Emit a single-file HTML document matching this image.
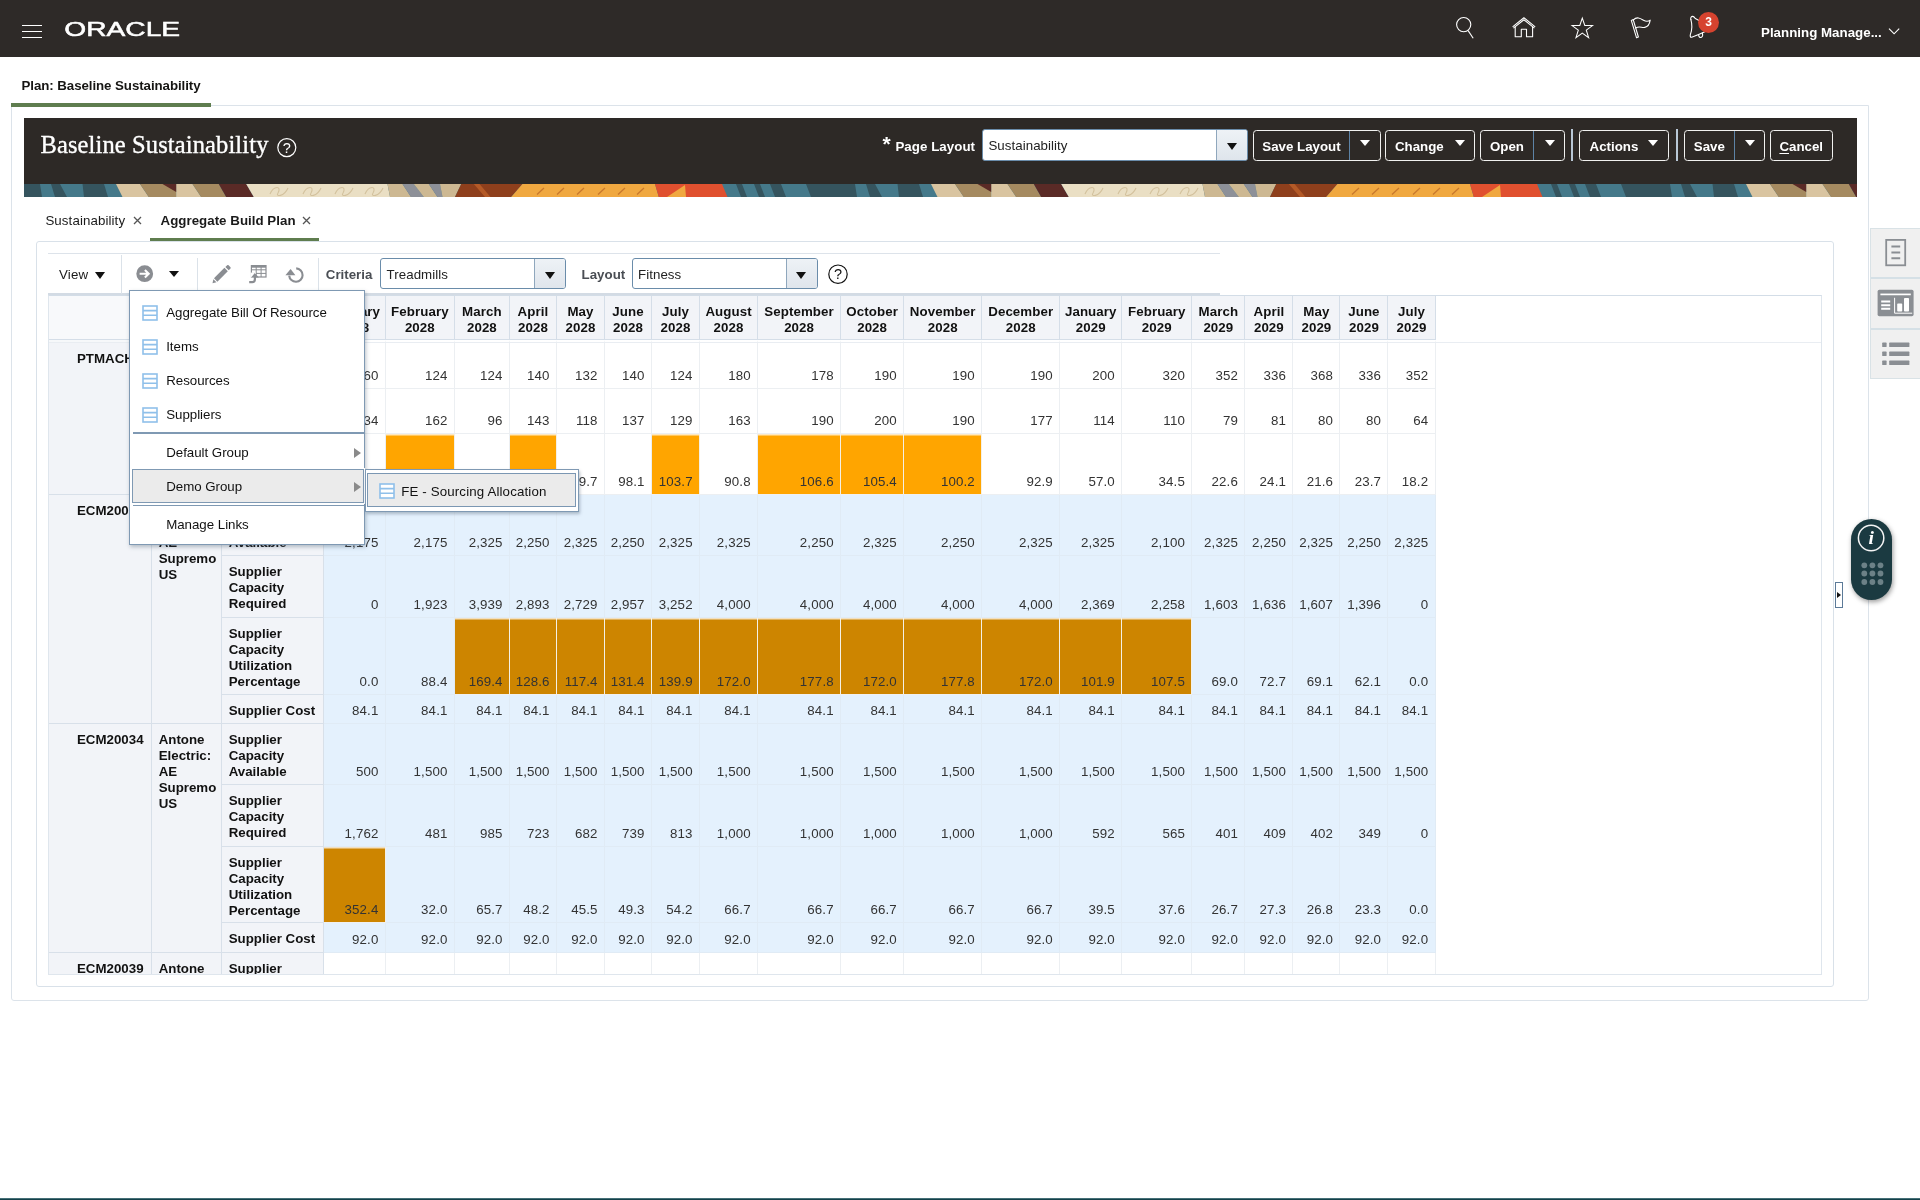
<!DOCTYPE html>
<html lang="en">
<head>
<meta charset="utf-8">
<title>Plan: Baseline Sustainability</title>
<style>
*{box-sizing:border-box;margin:0;padding:0}
html,body{width:1920px;height:1200px;overflow:hidden;background:#fff}
body{position:relative;font-family:"Liberation Sans",Arial,Helvetica,sans-serif;font-size:13.3px;color:#1a1a1a;line-height:16px}
.abs{position:absolute}
#page{position:absolute;left:0;top:0;width:1920px;height:1200px;overflow:hidden;will-change:transform}
/* ---------- global header ---------- */
#top{position:absolute;left:0;top:0;width:1920px;height:56.5px;background:#2e2a28}
#top .burger{position:absolute;left:21.5px;top:24.9px;width:20.5px;height:14px}
#top .burger i{display:block;height:1.6px;background:#fff;margin-bottom:4.4px}
#top svg{position:absolute;overflow:visible}
#top .user{position:absolute;left:1761px;top:24.5px;color:#fff;font-weight:bold;font-size:13.3px;letter-spacing:.02px;white-space:nowrap}
#top .badge{position:absolute;left:1698.1px;top:11.5px;width:21px;height:21px;border-radius:50%;background:#d6432f;color:#fff;font-weight:bold;font-size:12px;line-height:21px;text-align:center}
/* ---------- plan tab ---------- */
#plantab{position:absolute;left:21.5px;top:78px;font-weight:bold;font-size:13.3px;color:#161513;white-space:nowrap;letter-spacing:-.07px}
#planline{position:absolute;left:11px;top:103px;width:200px;height:3.6px;background:#5f7d4f}
#outer{position:absolute;left:11px;top:105px;width:1858px;height:896px;border:1.5px solid #dce3ea;border-radius:0 0 3px 3px}
/* ---------- banner ---------- */
#banner{position:absolute;left:24px;top:118px;width:1833px;height:66px;background:#2d2926}
#banner h1{position:absolute;left:16.5px;top:11.9px;font-family:"Liberation Serif","Times New Roman",serif;font-weight:normal;font-size:24.5px;line-height:30px;color:#fff;white-space:nowrap;letter-spacing:.12px;-webkit-text-stroke:.35px #fff}
#strip{position:absolute;left:24px;top:183.8px;width:1833px;height:13px;overflow:hidden}
.blabel{position:absolute;color:#fff;font-weight:bold;font-size:13.3px;white-space:nowrap}
.bbtn{position:absolute;top:11.7px;height:31px;border:1.6px solid #f1f1ef;border-radius:3.5px;color:#fff;font-weight:bold;font-size:13.3px;line-height:32px;padding-left:8.3px;white-space:nowrap}
.bbtn .tri{position:absolute;top:9.5px;width:0;height:0;border-left:5px solid transparent;border-right:5px solid transparent;border-top:6.8px solid #fff}
.bbtn .split{position:absolute;top:0;bottom:0;width:1.2px;background:#5d83a6}
.bsep{position:absolute;top:11px;width:1.6px;height:32px;background:#b9c8d6}
.combo{position:absolute;height:31.5px;border:1.2px solid #6a8caa;border-radius:3px;background:#fff;font-size:13.3px;color:#222;line-height:31.6px;padding-left:5.4px;letter-spacing:.06px;white-space:nowrap}
.combo .btn{position:absolute;right:0;top:0;bottom:0;width:31px;border-left:1.2px solid #8fa7bd;background:linear-gradient(#eef2f6,#dfe5ec);border-radius:0 2px 2px 0}
.combo .btn:after{content:"";position:absolute;left:9.5px;top:12.5px;border-left:5.3px solid transparent;border-right:5.3px solid transparent;border-top:7px solid #111}
/* ---------- sub tabs ---------- */
.subtab{position:absolute;top:212.6px;font-size:13.3px;white-space:nowrap;color:#1a1a1a;letter-spacing:.1px}
.subtab b{letter-spacing:.03px}
.subtab b{font-weight:bold}
.x{position:absolute;top:216px;width:9px;height:9px}
#subline{position:absolute;left:150px;top:238px;width:169px;height:3.2px;background:#5f7d4f}
#inner{position:absolute;left:35.6px;top:240.6px;width:1798.4px;height:746.4px;border:1.5px solid #d9e1e9;border-radius:3px}
/* ---------- toolbar ---------- */
#toolbar{position:absolute;left:48px;top:253px;width:1171.5px;height:42px;border-top:1.6px solid #dde3ea;border-bottom:2.4px solid #d3dbe4}
.tsep{position:absolute;top:256px;width:1.3px;height:37px;background:#dbe2e9}
.tlabel{position:absolute;top:266.8px;font-weight:bold;font-size:13.3px;color:#4a4e54;white-space:nowrap}
/* ---------- pivot table ---------- */
#grid{position:absolute;left:48px;top:295px;width:1773.5px;height:679.6px;overflow:hidden;border:1.2px solid #dfe6ed;border-top:1.6px solid #d3dde7;background:#fff}
#grid .hline{position:absolute;left:0;top:46.4px;width:100%;height:1px;background:#e9edf2}
table.pivot{position:absolute;left:-.4px;top:0;border-collapse:separate;border-spacing:0;table-layout:fixed;width:1387px}
table.pivot th,table.pivot td{font-size:13.3px;line-height:16px;overflow:hidden}
table.pivot thead th{height:44px;background:#f2f4f8;font-weight:bold;color:#111;text-align:center;vertical-align:top;padding:7.9px 0 0 0;border-right:1.3px solid #d5dee8;border-bottom:1.3px solid #d5dee8;white-space:nowrap;letter-spacing:.08px}
table.pivot thead th.corner{border-right:1.3px solid #d5dee8;background:#f8f9fb}
table.pivot tbody tr:first-child th,table.pivot tbody tr:first-child td{border-top:3px solid #fff}
table.pivot tbody tr:first-child th{border-top:3px solid #f6f8fa}
table.pivot th.rh{background:#f2f4f8;font-weight:bold;color:#111;text-align:left;vertical-align:top;padding:8.1px 2px 0 7px;border-right:1.3px solid #d8e0e9;border-bottom:1.3px solid #d8e0e9}
table.pivot th.rh div{overflow:hidden}
table.pivot th.item{padding-left:28.4px}
table.pivot td{text-align:right;vertical-align:bottom;padding:0 6.4px 4px 0;color:#333;border-right:1.2px solid #eceff2;border-bottom:1.2px solid #eceff2;background:#fff;white-space:nowrap;letter-spacing:.12px}
table.pivot tr.sel td{background:#e4f1fd;border-right-color:#e0ebf5;border-bottom-color:#e0ebf5}
table.pivot td.o1{background:#ffa500!important;background-clip:padding-box}
table.pivot td.o2{background:#cd8500!important}
table.pivot td.o1,table.pivot td.o2{border-right-color:#f4f0e6!important;border-bottom-color:#f0f0f0!important;box-shadow:inset 0 1.5px 0 rgba(255,255,255,.75)}
/* ---------- popup menus ---------- */
#menu{position:absolute;left:129px;top:289.5px;width:236px;height:255px;background:#fff;border:1.3px solid #7f99b3;box-shadow:1px 2px 4px rgba(60,80,100,.35)}
.mi{position:absolute;left:36.2px;font-size:13.3px;color:#111;white-space:nowrap;letter-spacing:-.02px}
.micon{position:absolute;width:16px;height:16px}
.msep{position:absolute;left:3px;right:0;height:1.5px;background:#7f99b3}
.marrow{position:absolute;left:224px;width:0;height:0;border-top:5px solid transparent;border-bottom:5px solid transparent;border-left:7.4px solid #8a8a8a}
#mhl{position:absolute;left:2px;top:178.6px;width:231.5px;height:33.5px;background:#ebebeb;border:1.4px solid #7f99b3;box-shadow:0 0 0 1px #fff}
#submenu{position:absolute;left:365px;top:469px;width:213.5px;height:43px;background:#fff;border:1.4px solid #7f99b3;box-shadow:1px 2px 3px rgba(60,80,100,.35)}
#submenu .it{position:absolute;left:1.2px;top:3.4px;width:209.3px;height:33.4px;background:#ebebeb;border:1.3px solid #7b97b3}
/* ---------- right rail ---------- */
#rail{position:absolute;left:1870.4px;top:227.5px;width:50px;height:151px;background:#f0f0f0;border:1.2px solid #d9e2e6;border-right:none}
#rail .d{position:absolute;left:0;width:100%;height:1.5px;background:#d5e0e6}
#pill{position:absolute;left:1850.6px;top:518.8px;width:41.4px;height:80.8px;border-radius:20.7px;background:#1b3a41;box-shadow:1px 2px 5px rgba(0,0,0,.4)}
#pill .c{position:absolute;left:6.8px;top:5.8px;width:27px;height:27px;border:1.5px solid #f3f3f3;border-radius:50%;color:#fff;font-family:"Liberation Serif",serif;font-style:italic;font-weight:bold;font-size:21px;line-height:23px;text-align:center;padding-left:1px}
#pill .dots{position:absolute;left:10.2px;top:43.2px;width:24px;line-height:0;font-size:0}
#pill .dots i{display:inline-block;width:5.8px;height:5.8px;border-radius:50%;background:#6b8187;margin:0 2.3px 2.6px 0}
#splitter{position:absolute;left:1835.2px;top:582px;width:7.8px;height:25.6px;border:1.2px solid #5c7a98;background:#fff}
#splitter:after{content:"";position:absolute;left:1.2px;top:8.6px;border-top:3.8px solid transparent;border-bottom:3.8px solid transparent;border-left:4.6px solid #111}
#bottomline{position:absolute;left:0;top:1197.6px;width:1920px;height:2.4px;background:linear-gradient(#7fa3aa,#17464f 45%,#123b44)}
</style>
</head>
<body>
<div id="page">

<!-- =============== GLOBAL HEADER =============== -->
<div id="top">
  <div class="burger"><i></i><i></i><i></i></div>
  <svg style="left:65px;top:17px" width="116" height="24" viewBox="0 0 116 24"><text x="-0.7" y="18.8" fill="#fff" font-family="Liberation Sans, Arial, sans-serif" font-size="20" stroke="#fff" stroke-width="0.5" textLength="115.8" lengthAdjust="spacingAndGlyphs">ORACLE</text></svg>
  <!-- search -->
  <svg style="left:1452px;top:14px" width="26" height="28" viewBox="0 0 26 28" fill="none" stroke="#fff" stroke-width="1.1"><circle cx="11.7" cy="10.6" r="7.1"/><path d="M16.1 16.6 L21.2 24.2"/></svg>
  <!-- home -->
  <svg style="left:1510px;top:14px" width="28" height="26" viewBox="0 0 28 26" fill="none" stroke="#fff" stroke-width="1.1" stroke-linejoin="round"><path d="M2.6 12.9 L13.9 3.8 L25.2 12.9"/><path d="M3.4 14.1 L13.9 5.8 L24.4 14.1"/><path d="M5.2 12.6 V22.8 H11.3 V15.2 H16.5 V22.8 H22.6 V12.6"/></svg>
  <!-- star -->
  <svg style="left:1569px;top:14px" width="28" height="27" viewBox="0 0 28 27" fill="none" stroke="#fff" stroke-width="1.05" stroke-linejoin="miter"><path d="M13.3 4.2 L15.8 11.5 L23.5 11.6 L17.3 16.2 L19.6 23.6 L13.3 19.1 L7.0 23.6 L9.3 16.2 L3.1 11.6 L10.8 11.5 Z"/></svg>
  <!-- flag -->
  <svg style="left:1627px;top:14px" width="28" height="27" viewBox="0 0 28 27" fill="none" stroke="#fff" stroke-width="1.1" stroke-linejoin="round" stroke-linecap="round"><path d="M4.3 6.4 L6.2 5.6 L11.4 23 L9.5 23.7 Z"/><path d="M6.4 5.9 C10 2.2 13.5 4.5 16.5 6.2 C19 7.6 21.5 7.3 23.2 6.2 C22.6 10 20.5 12.9 17.8 13.4 C14.5 14 12.6 11.6 8.7 14"/></svg>
  <!-- bell -->
  <svg style="left:1686px;top:13px" width="28" height="28" viewBox="0 0 28 28" fill="none" stroke="#fff" stroke-width="1.1" stroke-linejoin="round" stroke-linecap="round"><path d="M4.9 6.6 C4.2 4.6 5.4 3.3 6.7 3.4 C8 3.5 8.6 4.6 9.3 5.6 L13 7.4"/><path d="M4.9 6.6 C6.3 11.5 6.2 16.5 4.4 21.4 C4 22.8 4.2 24.6 5.7 24.2 L12.6 21.6 L21.6 17.5"/><path d="M12.7 21.6 C12.4 23.7 14 25 15.4 24.3 C16.6 23.7 16.9 22 16.4 20.1"/></svg>
  <div class="badge">3</div>
  <div class="user">Planning Manage...</div>
  <svg style="left:1888px;top:26.7px" width="13" height="9" viewBox="0 0 13 9" fill="none" stroke="#fff" stroke-width="1.15"><path d="M1 1.7 L6.1 6.8 L11.2 1.7"/></svg>
</div>

<!-- =============== PLAN TAB =============== -->
<div id="outer"></div>
<div id="plantab">Plan: Baseline Sustainability</div>
<div id="planline"></div>

<!-- =============== BANNER =============== -->
<div id="banner">
  <h1>Baseline Sustainability</h1>
  <svg class="abs" style="left:251.5px;top:18.5px" width="22" height="22" viewBox="0 0 22 22"><circle cx="10.8" cy="10.6" r="9" fill="none" stroke="#fff" stroke-width="1.2"/><text x="10.9" y="15.8" text-anchor="middle" fill="#fff" font-family="Liberation Sans, Arial, sans-serif" font-size="14.5">?</text></svg>
  <div class="blabel" style="left:858.6px;top:15.2px;font-size:21px;line-height:21px">*</div>
  <div class="blabel" style="left:871.4px;top:20.8px;letter-spacing:.06px">Page Layout</div>
  <div class="combo" style="left:958px;top:11.3px;width:266px">Sustainability<span class="btn"></span></div>

  <div class="bbtn" style="left:1229px;width:127.6px">Save Layout<span class="split" style="left:94.5px"></span><span class="tri" style="left:106px"></span></div>
  <div class="bbtn" style="left:1361px;width:90px;padding-left:9px">Change<span class="tri" style="left:68.5px"></span></div>
  <div class="bbtn" style="left:1456px;width:85px;padding-left:9px">Open<span class="split" style="left:52px"></span><span class="tri" style="left:63.5px"></span></div>
  <div class="bsep" style="left:1547.3px"></div>
  <div class="bbtn" style="left:1555.2px;width:89.5px;padding-left:9.4px">Actions<span class="tri" style="left:68px"></span></div>
  <div class="bsep" style="left:1652px"></div>
  <div class="bbtn" style="left:1660.2px;width:81px;padding-left:8.6px">Save<span class="split" style="left:48.5px"></span><span class="tri" style="left:60px"></span></div>
  <div class="bbtn" style="left:1746px;width:63px;padding-left:8.4px"><span style="text-decoration:underline;text-underline-offset:2px">C</span>ancel</div>
</div>
<div id="strip"><svg width="1833" height="13" viewBox="24 0 1833 13" preserveAspectRatio="none"><rect x="24" y="0" width="1833" height="13" fill="#45798a"/><polygon fill="#45798a" points="-93.0,0 116.0,0 122.5,13 -87.5,13"/><polygon fill="#35545e" points="-79.0,0 -73.0,0 -68.0,13 -74.0,13"/><polygon fill="#35545e" points="-61.0,0 -55.0,0 -50.0,13 -56.0,13"/><polygon fill="#35545e" points="-45.0,0 -34.0,0 -29.0,13 -40.0,13"/><polygon fill="#35545e" points="-9.0,0 40.0,0 42.0,13 -4.0,13"/><polygon fill="#35545e" points="51.0,0 60.0,0 67.0,13 55.0,13"/><polygon fill="#35545e" points="82.5,0 104.0,0 108.0,13 84.0,13"/><polygon fill="#d9c4a0" points="116.0,0 140.0,0 148.8,13 122.5,13"/><polygon fill="#a58a60" points="140.0,0 176.2,0 176.2,13 148.8,13"/><polygon fill="#d9c4a0" points="176.2,0 192.5,0 201.2,13 176.2,13"/><polygon fill="#a58a60" points="192.5,0 218.8,0 226.2,13 201.2,13"/><polygon fill="#5a2a26" points="218.8,0 246.2,0 253.8,13 226.2,13"/><polygon fill="#eadfc4" points="246.2,0 387.5,0 390.0,13 253.8,13"/><polygon fill="#cdb892" points="387.5,0 402.5,0 411.0,13 390.0,13"/><polygon fill="#8d9098" points="402.5,0 413.8,0 423.8,13 411.0,13"/><polygon fill="#cdb892" points="413.8,0 428.8,0 437.5,13 423.8,13"/><polygon fill="#8d9098" points="428.8,0 440.0,0 442.5,13 437.5,13"/><polygon fill="#cdb892" points="440.0,0 461.2,0 455.0,13 442.5,13"/><polygon fill="#8e3f1c" points="461.2,0 522.5,0 511.2,13 455.0,13"/><polygon fill="#b45a27" points="473.8,0 479.5,0 490.5,13 485.0,13"/><polygon fill="#f0a840" points="522.5,0 655.0,0 658.8,13 511.2,13"/><polygon fill="#e0502f" points="655.0,0 723.0,0 728.5,13 658.8,13"/><polygon fill="#5a2a26" points="162.5,0 176.2,0 176.2,8"/><polygon fill="#f0a840" points="667.0,13 686.0,13 685.0,1"/><path d="M537.0 10.5 l7 -6.5 M557.0 10.5 l7 -6.5 M577.0 10.5 l7 -6.5 M598.0 10.5 l7 -6.5 M618.0 10.5 l7 -6.5 M637.0 10.5 l7 -6.5" stroke="#c9782c" stroke-width="1.3" fill="none"/><path d="M270.0 10 c4 -9 12 -8 8 -1 c-3 4 6 4 10 -5 M303.0 10 c4 -9 12 -8 8 -1 c-3 4 6 4 10 -5 M335.0 10 c4 -9 12 -8 8 -1 c-3 4 6 4 10 -5 M365.0 10 c4 -9 12 -8 8 -1 c-3 4 6 4 10 -5" stroke="#d3c19d" stroke-width="1.1" fill="none"/><polygon fill="#45798a" points="722.0,0 931.0,0 937.5,13 727.5,13"/><polygon fill="#35545e" points="736.0,0 742.0,0 747.0,13 741.0,13"/><polygon fill="#35545e" points="754.0,0 760.0,0 765.0,13 759.0,13"/><polygon fill="#35545e" points="770.0,0 781.0,0 786.0,13 775.0,13"/><polygon fill="#35545e" points="806.0,0 855.0,0 857.0,13 811.0,13"/><polygon fill="#35545e" points="866.0,0 875.0,0 882.0,13 870.0,13"/><polygon fill="#35545e" points="897.5,0 919.0,0 923.0,13 899.0,13"/><polygon fill="#d9c4a0" points="931.0,0 955.0,0 963.8,13 937.5,13"/><polygon fill="#a58a60" points="955.0,0 991.2,0 991.2,13 963.8,13"/><polygon fill="#d9c4a0" points="991.2,0 1007.5,0 1016.2,13 991.2,13"/><polygon fill="#a58a60" points="1007.5,0 1033.8,0 1041.2,13 1016.2,13"/><polygon fill="#5a2a26" points="1033.8,0 1061.2,0 1068.8,13 1041.2,13"/><polygon fill="#eadfc4" points="1061.2,0 1202.5,0 1205.0,13 1068.8,13"/><polygon fill="#cdb892" points="1202.5,0 1217.5,0 1226.0,13 1205.0,13"/><polygon fill="#8d9098" points="1217.5,0 1228.8,0 1238.8,13 1226.0,13"/><polygon fill="#cdb892" points="1228.8,0 1243.8,0 1252.5,13 1238.8,13"/><polygon fill="#8d9098" points="1243.8,0 1255.0,0 1257.5,13 1252.5,13"/><polygon fill="#cdb892" points="1255.0,0 1276.2,0 1270.0,13 1257.5,13"/><polygon fill="#8e3f1c" points="1276.2,0 1337.5,0 1326.2,13 1270.0,13"/><polygon fill="#b45a27" points="1288.8,0 1294.5,0 1305.5,13 1300.0,13"/><polygon fill="#f0a840" points="1337.5,0 1470.0,0 1473.8,13 1326.2,13"/><polygon fill="#e0502f" points="1470.0,0 1538.0,0 1543.5,13 1473.8,13"/><polygon fill="#5a2a26" points="977.5,0 991.2,0 991.2,8"/><polygon fill="#f0a840" points="1482.0,13 1501.0,13 1500.0,1"/><path d="M1352.0 10.5 l7 -6.5 M1372.0 10.5 l7 -6.5 M1392.0 10.5 l7 -6.5 M1413.0 10.5 l7 -6.5 M1433.0 10.5 l7 -6.5 M1452.0 10.5 l7 -6.5" stroke="#c9782c" stroke-width="1.3" fill="none"/><path d="M1085.0 10 c4 -9 12 -8 8 -1 c-3 4 6 4 10 -5 M1118.0 10 c4 -9 12 -8 8 -1 c-3 4 6 4 10 -5 M1150.0 10 c4 -9 12 -8 8 -1 c-3 4 6 4 10 -5 M1180.0 10 c4 -9 12 -8 8 -1 c-3 4 6 4 10 -5" stroke="#d3c19d" stroke-width="1.1" fill="none"/><polygon fill="#45798a" points="1537.0,0 1746.0,0 1752.5,13 1542.5,13"/><polygon fill="#35545e" points="1551.0,0 1557.0,0 1562.0,13 1556.0,13"/><polygon fill="#35545e" points="1569.0,0 1575.0,0 1580.0,13 1574.0,13"/><polygon fill="#35545e" points="1585.0,0 1596.0,0 1601.0,13 1590.0,13"/><polygon fill="#35545e" points="1621.0,0 1670.0,0 1672.0,13 1626.0,13"/><polygon fill="#35545e" points="1681.0,0 1690.0,0 1697.0,13 1685.0,13"/><polygon fill="#35545e" points="1712.5,0 1734.0,0 1738.0,13 1714.0,13"/><polygon fill="#d9c4a0" points="1746.0,0 1770.0,0 1778.8,13 1752.5,13"/><polygon fill="#a58a60" points="1770.0,0 1806.2,0 1806.2,13 1778.8,13"/><polygon fill="#d9c4a0" points="1806.2,0 1822.5,0 1831.2,13 1806.2,13"/><polygon fill="#a58a60" points="1822.5,0 1848.8,0 1856.2,13 1831.2,13"/><polygon fill="#5a2a26" points="1848.8,0 1876.2,0 1883.8,13 1856.2,13"/><polygon fill="#eadfc4" points="1876.2,0 2017.5,0 2020.0,13 1883.8,13"/><polygon fill="#cdb892" points="2017.5,0 2032.5,0 2041.0,13 2020.0,13"/><polygon fill="#8d9098" points="2032.5,0 2043.8,0 2053.8,13 2041.0,13"/><polygon fill="#cdb892" points="2043.8,0 2058.8,0 2067.5,13 2053.8,13"/><polygon fill="#8d9098" points="2058.8,0 2070.0,0 2072.5,13 2067.5,13"/><polygon fill="#cdb892" points="2070.0,0 2091.2,0 2085.0,13 2072.5,13"/><polygon fill="#8e3f1c" points="2091.2,0 2152.5,0 2141.2,13 2085.0,13"/><polygon fill="#b45a27" points="2103.8,0 2109.5,0 2120.5,13 2115.0,13"/><polygon fill="#f0a840" points="2152.5,0 2285.0,0 2288.8,13 2141.2,13"/><polygon fill="#e0502f" points="2285.0,0 2353.0,0 2358.5,13 2288.8,13"/><polygon fill="#5a2a26" points="1792.5,0 1806.2,0 1806.2,8"/><polygon fill="#f0a840" points="2297.0,13 2316.0,13 2315.0,1"/><path d="M2167.0 10.5 l7 -6.5 M2187.0 10.5 l7 -6.5 M2207.0 10.5 l7 -6.5 M2228.0 10.5 l7 -6.5 M2248.0 10.5 l7 -6.5 M2267.0 10.5 l7 -6.5" stroke="#c9782c" stroke-width="1.3" fill="none"/><path d="M1900.0 10 c4 -9 12 -8 8 -1 c-3 4 6 4 10 -5 M1933.0 10 c4 -9 12 -8 8 -1 c-3 4 6 4 10 -5 M1965.0 10 c4 -9 12 -8 8 -1 c-3 4 6 4 10 -5 M1995.0 10 c4 -9 12 -8 8 -1 c-3 4 6 4 10 -5" stroke="#d3c19d" stroke-width="1.1" fill="none"/></svg></div>

<!-- =============== SUB TABS =============== -->
<div class="subtab" style="left:45.4px">Sustainability</div>
<svg class="x" style="left:132.5px" viewBox="0 0 9 9" stroke="#555" stroke-width="1.3" fill="none"><path d="M1 1 L8 8 M8 1 L1 8"/></svg>
<div class="subtab" style="left:160.5px"><b>Aggregate Build Plan</b></div>
<svg class="x" style="left:301.8px" viewBox="0 0 9 9" stroke="#555" stroke-width="1.3" fill="none"><path d="M1 1 L8 8 M8 1 L1 8"/></svg>
<div id="inner"></div>
<div id="subline"></div>

<!-- =============== TOOLBAR =============== -->
<div id="toolbar"></div>
<div class="abs" style="left:59px;top:266.6px;font-size:13.3px;white-space:nowrap;letter-spacing:.15px">View</div>
<div class="abs" style="left:94.5px;top:271.5px;border-left:5.3px solid transparent;border-right:5.3px solid transparent;border-top:7px solid #111"></div>
<div class="tsep" style="left:120.8px;top:254.5px;height:39px"></div>
<!-- go-to icon -->
<svg class="abs" style="left:135px;top:264px" width="20" height="20" viewBox="0 0 20 20"><circle cx="9.7" cy="9.7" r="8.4" fill="#8a8d92"/><path d="M4.6 9.7 H13.2 M9.9 5.9 L13.7 9.7 L9.9 13.5" fill="none" stroke="#fff" stroke-width="2.1"/></svg>
<div class="abs" style="left:168.6px;top:271.2px;border-left:5px solid transparent;border-right:5px solid transparent;border-top:6.6px solid #111"></div>
<div class="tsep" style="left:197px;top:257.5px;height:33px"></div>
<!-- pencil -->
<svg class="abs" style="left:211px;top:264px" width="21.2" height="20.2" viewBox="0 0 23 22" fill="#8a8d92"><path d="M15.6 3.2 L17.6 1.4 C18.1 1 18.7 1 19.1 1.4 L21.2 3.6 C21.6 4 21.6 4.6 21.2 5 L19.3 6.9 Z"/><path d="M14.6 4.2 L18.3 7.9 L6.9 19.3 L3.2 15.6 Z"/><path d="M2.5 16.6 L5.9 20 L1.6 20.9 Z"/></svg>
<!-- table export -->
<svg class="abs" style="left:248px;top:263px" width="20" height="22" viewBox="0 0 20 22" fill="none" stroke="#8a8d92"><rect x="3.4" y="2.6" width="14.6" height="11.4" stroke-width="1.2"/><path d="M3.4 3.6 H18" stroke-width="2.2"/><path d="M3.4 6.8 H18 M3.4 10.4 H18 M8.2 2.6 V14 M13.1 2.6 V14" stroke-width="1"/><rect x="2.4" y="9.6" width="5.6" height="5" fill="#fff" stroke="none"/><path d="M1.2 19.2 H4.2 C6.2 19.2 6.9 18.2 6.9 16.2 V13" stroke-width="2.2"/><path d="M3 14.4 L6.9 10 L10.8 14.4 Z" fill="#8a8d92" stroke="none"/></svg>
<!-- refresh -->
<svg class="abs" style="left:284px;top:263.5px" width="22" height="22" viewBox="0 0 22 22" fill="none" stroke="#8a8d92"><path d="M12.2 4.4 A6.7 6.7 0 1 1 5.2 11.6" stroke-width="2.1"/><path d="M1.4 11.2 L6.6 5 L11.4 11.2 Z" fill="#8a8d92" stroke="none"/></svg>
<div class="tsep" style="left:317.5px;top:257.5px;height:33px"></div>
<div class="tlabel" style="left:325.8px">Criteria</div>
<div class="combo" style="left:380.2px;top:258.2px;width:186px;height:31.2px">Treadmills<span class="btn"></span></div>
<div class="tlabel" style="left:581.6px">Layout</div>
<div class="combo" style="left:631.6px;top:258.2px;width:186px;height:31.2px">Fitness<span class="btn"></span></div>
<svg class="abs" style="left:827px;top:263px" width="22" height="22" viewBox="0 0 22 22"><circle cx="11" cy="11.2" r="9.2" fill="none" stroke="#111" stroke-width="1.2"/><text x="11.1" y="16.4" text-anchor="middle" fill="#111" font-family="Liberation Sans, Arial, sans-serif" font-size="14.5">?</text></svg>

<!-- =============== PIVOT TABLE =============== -->
<div id="grid">
<table class="pivot"><colgroup><col style="width:103px"><col style="width:70px"><col style="width:102px"><col style="width:62px"><col style="width:69px"><col style="width:55px"><col style="width:47px"><col style="width:48px"><col style="width:47px"><col style="width:48px"><col style="width:58px"><col style="width:83px"><col style="width:63px"><col style="width:78px"><col style="width:78px"><col style="width:62px"><col style="width:70px"><col style="width:53px"><col style="width:48px"><col style="width:47px"><col style="width:48px"><col style="width:47px"></colgroup>
<thead><tr><th class="corner" colspan="3"></th><th>January<br>2028</th><th>February<br>2028</th><th>March<br>2028</th><th>April<br>2028</th><th>May<br>2028</th><th>June<br>2028</th><th>July<br>2028</th><th>August<br>2028</th><th>September<br>2028</th><th>October<br>2028</th><th>November<br>2028</th><th>December<br>2028</th><th>January<br>2029</th><th>February<br>2029</th><th>March<br>2029</th><th>April<br>2029</th><th>May<br>2029</th><th>June<br>2029</th><th>July<br>2029</th></tr></thead>
<tbody>
<tr style="height:49.0px" class=""><th class="rh item" rowspan="3"><div>PTMACH</div></th><th class="rh" rowspan="3"><div>Machining<br>Center</div></th><th class="rh meas"><div>Resource<br>Availability</div></th><td>160</td><td>124</td><td>124</td><td>140</td><td>132</td><td>140</td><td>124</td><td>180</td><td>178</td><td>190</td><td>190</td><td>190</td><td>200</td><td>320</td><td>352</td><td>336</td><td>368</td><td>336</td><td>352</td></tr>
<tr style="height:44.5px" class=""><th class="rh meas"><div>Resource<br>Requirements</div></th><td>134</td><td>162</td><td>96</td><td>143</td><td>118</td><td>137</td><td>129</td><td>163</td><td>190</td><td>200</td><td>190</td><td>177</td><td>114</td><td>110</td><td>79</td><td>81</td><td>80</td><td>80</td><td>64</td></tr>
<tr style="height:61.6px" class=""><th class="rh meas"><div>Resource<br>Utilization<br>Percentage</div></th><td>83.8</td><td class="o1">130.6</td><td>77.4</td><td class="o1">102.1</td><td>89.7</td><td>98.1</td><td class="o1">103.7</td><td>90.8</td><td class="o1">106.6</td><td class="o1">105.4</td><td class="o1">100.2</td><td>92.9</td><td>57.0</td><td>34.5</td><td>22.6</td><td>24.1</td><td>21.6</td><td>23.7</td><td>18.2</td></tr>
<tr style="height:61.0px" class="sel"><th class="rh item" rowspan="4"><div>ECM20033</div></th><th class="rh" rowspan="4"><div>Antone<br>Electric:<br>AE<br>Supremo<br>US</div></th><th class="rh meas"><div>Supplier<br>Capacity<br>Available</div></th><td>2,175</td><td>2,175</td><td>2,325</td><td>2,250</td><td>2,325</td><td>2,250</td><td>2,325</td><td>2,325</td><td>2,250</td><td>2,325</td><td>2,250</td><td>2,325</td><td>2,325</td><td>2,100</td><td>2,325</td><td>2,250</td><td>2,325</td><td>2,250</td><td>2,325</td></tr>
<tr style="height:61.5px" class="sel"><th class="rh meas"><div>Supplier<br>Capacity<br>Required</div></th><td>0</td><td>1,923</td><td>3,939</td><td>2,893</td><td>2,729</td><td>2,957</td><td>3,252</td><td>4,000</td><td>4,000</td><td>4,000</td><td>4,000</td><td>4,000</td><td>2,369</td><td>2,258</td><td>1,603</td><td>1,636</td><td>1,607</td><td>1,396</td><td>0</td></tr>
<tr style="height:77.2px" class="sel"><th class="rh meas"><div>Supplier<br>Capacity<br>Utilization<br>Percentage</div></th><td>0.0</td><td>88.4</td><td class="o2">169.4</td><td class="o2">128.6</td><td class="o2">117.4</td><td class="o2">131.4</td><td class="o2">139.9</td><td class="o2">172.0</td><td class="o2">177.8</td><td class="o2">172.0</td><td class="o2">177.8</td><td class="o2">172.0</td><td class="o2">101.9</td><td class="o2">107.5</td><td>69.0</td><td>72.7</td><td>69.1</td><td>62.1</td><td>0.0</td></tr>
<tr style="height:29.2px" class="sel"><th class="rh meas"><div>Supplier Cost</div></th><td>84.1</td><td>84.1</td><td>84.1</td><td>84.1</td><td>84.1</td><td>84.1</td><td>84.1</td><td>84.1</td><td>84.1</td><td>84.1</td><td>84.1</td><td>84.1</td><td>84.1</td><td>84.1</td><td>84.1</td><td>84.1</td><td>84.1</td><td>84.1</td><td>84.1</td></tr>
<tr style="height:61.4px" class="sel"><th class="rh item" rowspan="4"><div>ECM20034</div></th><th class="rh" rowspan="4"><div>Antone<br>Electric:<br>AE<br>Supremo<br>US</div></th><th class="rh meas"><div>Supplier<br>Capacity<br>Available</div></th><td>500</td><td>1,500</td><td>1,500</td><td>1,500</td><td>1,500</td><td>1,500</td><td>1,500</td><td>1,500</td><td>1,500</td><td>1,500</td><td>1,500</td><td>1,500</td><td>1,500</td><td>1,500</td><td>1,500</td><td>1,500</td><td>1,500</td><td>1,500</td><td>1,500</td></tr>
<tr style="height:61.2px" class="sel"><th class="rh meas"><div>Supplier<br>Capacity<br>Required</div></th><td>1,762</td><td>481</td><td>985</td><td>723</td><td>682</td><td>739</td><td>813</td><td>1,000</td><td>1,000</td><td>1,000</td><td>1,000</td><td>1,000</td><td>592</td><td>565</td><td>401</td><td>409</td><td>402</td><td>349</td><td>0</td></tr>
<tr style="height:76.6px" class="sel"><th class="rh meas"><div>Supplier<br>Capacity<br>Utilization<br>Percentage</div></th><td class="o2">352.4</td><td>32.0</td><td>65.7</td><td>48.2</td><td>45.5</td><td>49.3</td><td>54.2</td><td>66.7</td><td>66.7</td><td>66.7</td><td>66.7</td><td>66.7</td><td>39.5</td><td>37.6</td><td>26.7</td><td>27.3</td><td>26.8</td><td>23.3</td><td>0.0</td></tr>
<tr style="height:29.4px" class="sel"><th class="rh meas"><div>Supplier Cost</div></th><td>92.0</td><td>92.0</td><td>92.0</td><td>92.0</td><td>92.0</td><td>92.0</td><td>92.0</td><td>92.0</td><td>92.0</td><td>92.0</td><td>92.0</td><td>92.0</td><td>92.0</td><td>92.0</td><td>92.0</td><td>92.0</td><td>92.0</td><td>92.0</td><td>92.0</td></tr>
<tr style="height:61.4px" class=""><th class="rh item" rowspan="1"><div>ECM20039</div></th><th class="rh" rowspan="1"><div>Antone<br>Electric:<br>AE<br>Supremo<br>US</div></th><th class="rh meas"><div>Supplier<br>Capacity<br>Available</div></th><td></td><td></td><td></td><td></td><td></td><td></td><td></td><td></td><td></td><td></td><td></td><td></td><td></td><td></td><td></td><td></td><td></td><td></td><td></td></tr>
</tbody></table>
<div class="hline"></div>
</div>

<!-- =============== POPUP MENU =============== -->
<div id="menu">
  <div id="mhl"></div>
  <svg class="micon" style="left:11.6px;top:14.2px" viewBox="0 0 16 16"><rect x="1" y="1" width="14" height="14" fill="#fff" stroke="#8fc0ea" stroke-width="1.6"/><path d="M1 5.6 H15 M1 10.2 H15" stroke="#8fc0ea" stroke-width="1.6"/></svg>
  <div class="mi" style="top:14.5px">Aggregate Bill Of Resource</div>
  <svg class="micon" style="left:11.6px;top:48.2px" viewBox="0 0 16 16"><rect x="1" y="1" width="14" height="14" fill="#fff" stroke="#8fc0ea" stroke-width="1.6"/><path d="M1 5.6 H15 M1 10.2 H15" stroke="#8fc0ea" stroke-width="1.6"/></svg>
  <div class="mi" style="top:48.5px">Items</div>
  <svg class="micon" style="left:11.6px;top:82.2px" viewBox="0 0 16 16"><rect x="1" y="1" width="14" height="14" fill="#fff" stroke="#8fc0ea" stroke-width="1.6"/><path d="M1 5.6 H15 M1 10.2 H15" stroke="#8fc0ea" stroke-width="1.6"/></svg>
  <div class="mi" style="top:82.5px">Resources</div>
  <svg class="micon" style="left:11.6px;top:116.2px" viewBox="0 0 16 16"><rect x="1" y="1" width="14" height="14" fill="#fff" stroke="#8fc0ea" stroke-width="1.6"/><path d="M1 5.6 H15 M1 10.2 H15" stroke="#8fc0ea" stroke-width="1.6"/></svg>
  <div class="mi" style="top:116.5px">Suppliers</div>
  <div class="msep" style="top:141.8px"></div>
  <div class="mi" style="top:154.5px">Default Group</div>
  <div class="marrow" style="top:157.3px"></div>
  <div class="mi" style="top:188.7px">Demo Group</div>
  <div class="marrow" style="top:191.5px"></div>
  <div class="msep" style="top:214.2px"></div>
  <div class="mi" style="top:226px">Manage Links</div>
</div>
<div id="submenu">
  <div class="it">
    <svg class="micon" style="left:10.5px;top:8.6px" viewBox="0 0 16 16"><rect x="1" y="1" width="14" height="14" fill="#fff" stroke="#8fc0ea" stroke-width="1.6"/><path d="M1 5.6 H15 M1 10.2 H15" stroke="#8fc0ea" stroke-width="1.6"/></svg>
    <div class="mi" style="left:33px;top:9.6px;letter-spacing:.14px">FE - Sourcing Allocation</div>
  </div>
</div>

<!-- =============== RIGHT RAIL =============== -->
<div id="rail">
  <div class="d" style="top:48.6px"></div>
  <div class="d" style="top:99.6px"></div>
  <svg class="abs" style="left:13px;top:9.5px" width="24" height="30" viewBox="0 0 24 30" fill="none" stroke="#8a8e93"><rect x="2.2" y="1.9" width="19" height="25.4" stroke-width="1.8"/><path d="M7.4 8.6 H16.2 M7.4 14.4 H16.2 M7.4 20.2 H16.2" stroke-width="2"/></svg>
  <svg class="abs" style="left:5.5px;top:60.5px" width="38" height="29" viewBox="0 0 38 29"><rect x="0.6" y="0.7" width="36" height="26.6" rx="1.8" fill="#8a8e93"/><path d="M3.4 5.4 H33.8" stroke="#fff" stroke-width="1.7"/><path d="M4.2 12.6 H13.2 M4.2 16.2 H13.2 M4.2 19.8 H13.2" stroke="#fff" stroke-width="2"/><path d="M17.6 8.8 V24.2 H35.2" stroke="#fff" stroke-width="1" fill="none"/><rect x="20.2" y="14.6" width="5" height="8" rx=".8" fill="#fff"/><rect x="27" y="9" width="5" height="13.6" rx=".8" fill="#fff"/></svg>
  <svg class="abs" style="left:9.5px;top:112px" width="30" height="26" viewBox="0 0 30 26" fill="#8a8e93"><rect x="1.2" y="1.6" width="4.4" height="4.4" rx=".6"/><rect x="8.2" y="1.6" width="20.2" height="4.4" rx=".6"/><rect x="1.2" y="10.6" width="4.4" height="4.4" rx=".6"/><rect x="8.2" y="10.6" width="20.2" height="4.4" rx=".6"/><rect x="1.2" y="19.6" width="4.4" height="4.4" rx=".6"/><rect x="8.2" y="19.6" width="20.2" height="4.4" rx=".6"/></svg>
</div>
<div id="splitter"></div>
<div id="pill"><svg width="42" height="81" viewBox="0 0 42 81" style="position:absolute;left:0;top:0;overflow:visible"><circle cx="20.1" cy="19" r="12.7" fill="none" stroke="#f4f4f4" stroke-width="1.5"/><text x="20.3" y="25.4" text-anchor="middle" fill="#fff" font-family="Liberation Serif, Times New Roman, serif" font-style="italic" font-weight="bold" font-size="19.5">i</text><g fill="#6c8187"><circle cx="13.3" cy="46.3" r="2.9"/><circle cx="21.4" cy="46.3" r="2.9"/><circle cx="29.5" cy="46.3" r="2.9"/><circle cx="13.3" cy="54.5" r="2.9"/><circle cx="21.4" cy="54.5" r="2.9"/><circle cx="29.5" cy="54.5" r="2.9"/><circle cx="13.3" cy="63" r="2.9"/><circle cx="21.4" cy="63" r="2.9"/><circle cx="29.5" cy="63" r="2.9"/></g></svg></div>
<div id="bottomline"></div>
</div>
</body>
</html>
